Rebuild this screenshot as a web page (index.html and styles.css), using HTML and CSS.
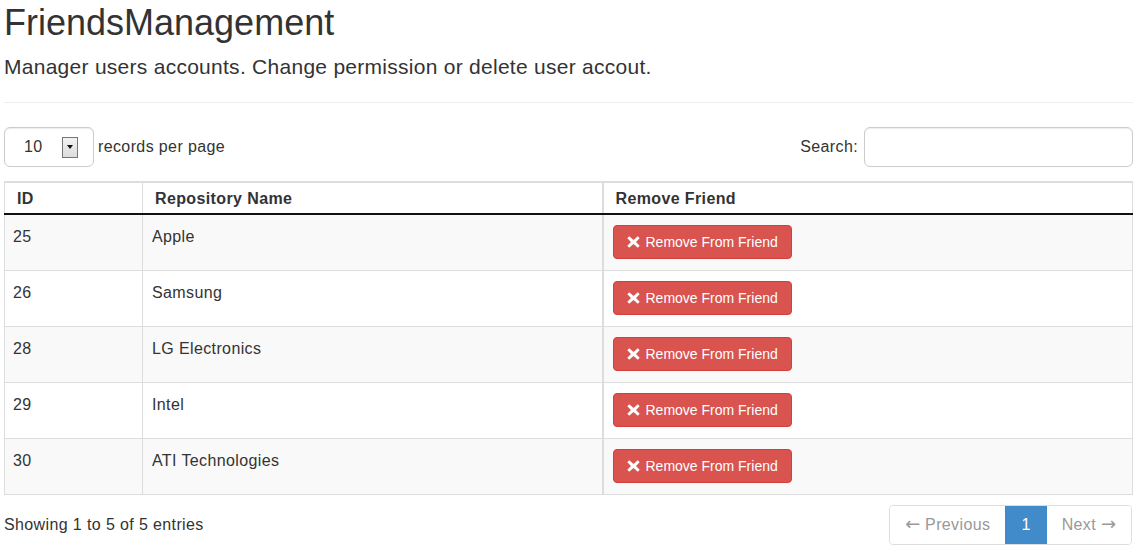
FILE: index.html
```html
<!DOCTYPE html>
<html>
<head>
<meta charset="utf-8">
<link rel="stylesheet" href="styles.css">
</head>
<body>
<div class="page">
  <h1 class="title">FriendsManagement</h1>
  <p class="lead">Manager users accounts. Change permission or delete user accout.</p>
  <hr class="divider">
  <div class="controls">
    <div class="length">
      <div class="fake-select">
        <span class="sel-value">10</span>
        <span class="sel-arrow"><span class="tri"></span></span>
      </div>
      <span class="length-label">records per page</span>
    </div>
    <div class="search">
      <label class="search-label">Search:</label>
      <input class="search-input" type="text">
    </div>
  </div>
  <table class="grid">
    <thead>
      <tr>
        <th class="c-id">ID</th>
        <th class="c-name">Repository Name</th>
        <th class="c-act">Remove Friend</th>
      </tr>
    </thead>
    <tbody>
      <tr class="odd"><td>25</td><td class="name">Apple</td><td class="act"><button class="btn-danger"><svg class="x" viewBox="0 0 13 12"><path d="M2.2 0.3 L6.5 3.9 L10.8 0.3 L12.7 2.3 L9 6 L12.7 9.7 L10.8 11.7 L6.5 8.1 L2.2 11.7 L0.3 9.7 L4 6 L0.3 2.3Z"/></svg>Remove From Friend</button></td></tr>
      <tr class="even"><td>26</td><td class="name">Samsung</td><td class="act"><button class="btn-danger"><svg class="x" viewBox="0 0 13 12"><path d="M2.2 0.3 L6.5 3.9 L10.8 0.3 L12.7 2.3 L9 6 L12.7 9.7 L10.8 11.7 L6.5 8.1 L2.2 11.7 L0.3 9.7 L4 6 L0.3 2.3Z"/></svg>Remove From Friend</button></td></tr>
      <tr class="odd"><td>28</td><td class="name">LG Electronics</td><td class="act"><button class="btn-danger"><svg class="x" viewBox="0 0 13 12"><path d="M2.2 0.3 L6.5 3.9 L10.8 0.3 L12.7 2.3 L9 6 L12.7 9.7 L10.8 11.7 L6.5 8.1 L2.2 11.7 L0.3 9.7 L4 6 L0.3 2.3Z"/></svg>Remove From Friend</button></td></tr>
      <tr class="even"><td>29</td><td class="name">Intel</td><td class="act"><button class="btn-danger"><svg class="x" viewBox="0 0 13 12"><path d="M2.2 0.3 L6.5 3.9 L10.8 0.3 L12.7 2.3 L9 6 L12.7 9.7 L10.8 11.7 L6.5 8.1 L2.2 11.7 L0.3 9.7 L4 6 L0.3 2.3Z"/></svg>Remove From Friend</button></td></tr>
      <tr class="odd"><td>30</td><td class="name">ATI Technologies</td><td class="act"><button class="btn-danger"><svg class="x" viewBox="0 0 13 12"><path d="M2.2 0.3 L6.5 3.9 L10.8 0.3 L12.7 2.3 L9 6 L12.7 9.7 L10.8 11.7 L6.5 8.1 L2.2 11.7 L0.3 9.7 L4 6 L0.3 2.3Z"/></svg>Remove From Friend</button></td></tr>
    </tbody>
  </table>
  <div class="footer">
    <div class="info">Showing 1 to 5 of 5 entries</div>
    <ul class="pager">
      <li class="disabled"><span><span class="arr">←</span> Previous</span></li>
      <li class="active"><span>1</span></li>
      <li class="disabled"><span>Next <span class="arr">→</span></span></li>
    </ul>
  </div>
</div>
</body>
</html>
```

FILE: styles.css
```css
* { box-sizing: border-box; }
html, body {
  margin: 0;
  padding: 0;
  background: #fff;
}
body {
  font-family: "Liberation Sans", Arial, sans-serif;
  font-size: 16px;
  letter-spacing: 0.38px;
  color: #333;
}
.page {
  padding: 0 6px 0 4px;
}
.title {
  margin: 3px 0 0;
  font-size: 36px;
  line-height: 40px;
  font-weight: normal;
  letter-spacing: 0;
  color: #333;
}
.lead {
  margin: 9px 0 0;
  font-size: 21px;
  line-height: 30px;
  letter-spacing: 0.27px;
}
.divider {
  margin: 20px 0 0;
  border: 0;
  border-top: 1px solid #eee;
  height: 0;
}
.controls {
  margin-top: 24px;
  display: flex;
  justify-content: space-between;
  align-items: center;
  height: 40px;
}
.length {
  display: flex;
  align-items: center;
}
.fake-select {
  width: 90px;
  height: 40px;
  border: 1px solid #ccc;
  border-radius: 6px;
  box-shadow: inset 0 1px 1px rgba(0,0,0,0.075);
  display: flex;
  align-items: center;
  padding-left: 19px;
}
.sel-value {
  font-size: 16px;
  line-height: 22px;
  width: 38px;
}
.sel-arrow {
  width: 16px;
  height: 21px;
  border: 1px solid #777;
  background: linear-gradient(#f2f2f2, #dcdcdc);
  display: flex;
  align-items: center;
  justify-content: center;
}
.tri {
  width: 0;
  height: 0;
  border-left: 3px solid transparent;
  border-right: 3px solid transparent;
  border-top: 4px solid #111;
}
.length-label {
  margin-left: 4px;
  line-height: 22px;
}
.search {
  display: flex;
  align-items: center;
}
.search-label {
  line-height: 22px;
  margin-right: 6px;
}
.search-input {
  width: 269px;
  height: 40px;
  border: 1px solid #ccc;
  border-radius: 6px;
  box-shadow: inset 0 1px 1px rgba(0,0,0,0.075);
  font: inherit;
  padding: 0 12px;
  outline: none;
}
.grid {
  margin-top: 14px;
  width: 100%;
  border-collapse: collapse;
  border: 1px solid #ddd;
  border-top: 2px solid #ddd;
}
.grid th {
  text-align: left;
  font-weight: bold;
  font-size: 16px;
  line-height: 22px;
  height: 32px;
  padding: 5px 10px 0 12px;
  vertical-align: top;
  border-left: 1px solid #ddd;
  border-bottom: 2px solid #111;
}
.grid .c-id { width: 138px; }
.grid .c-name { width: 460px; }
.grid .c-act { border-left: 2px solid #ddd; }
.grid td {
  height: 56px;
  padding: 11px 8px 0 8px;
  line-height: 22px;
  vertical-align: top;
  border-left: 1px solid #ddd;
  border-top: 1px solid #ddd;
}
.grid td.name { padding-left: 9px; }
.grid td.act {
  border-left: 2px solid #ddd;
  padding-top: 10px;
  padding-left: 9px;
}
.grid tbody tr:first-child td { border-top: 0; }
.grid tr.odd td { background: #f9f9f9; }
.grid tr.even td { background: #fff; }
.btn-danger {
  display: inline-flex;
  align-items: center;
  height: 34px;
  padding: 0 13px;
  border: 1px solid #d43f3a;
  border-radius: 4px;
  background: #d9534f;
  color: #fff;
  font-family: "Liberation Sans", Arial, sans-serif;
  font-size: 14px;
  line-height: 20px;
  letter-spacing: 0;
  cursor: pointer;
}
.x {
  width: 13px;
  height: 12px;
  fill: #fff;
  margin-right: 6px;
}
.footer {
  margin-top: 10px;
  display: flex;
  justify-content: space-between;
  align-items: center;
}
.info {
  line-height: 22px;
}
.pager {
  list-style: none;
  margin: 0;
  padding: 0;
  display: flex;
  border: 1px solid #ddd;
  border-radius: 4px;
  overflow: hidden;
  margin-right: 1px;
}
.pager li > span {
  display: block;
  height: 38px;
  padding: 8px 15px;
  line-height: 22px;
  font-size: 16px;
}
.pager .arr {
  font-family: "DejaVu Sans", sans-serif;
  font-size: 18px;
  line-height: 1;
  letter-spacing: 0;
}
.pager li + li > span { border-left: 1px solid #ddd; }
.pager li.disabled > span { color: #999; background: #fff; }
.pager li.active > span {
  background: #428bca;
  color: #fff;
  border-left-color: #428bca;
}
.pager li.active + li > span { border-left-color: #428bca; }
```
